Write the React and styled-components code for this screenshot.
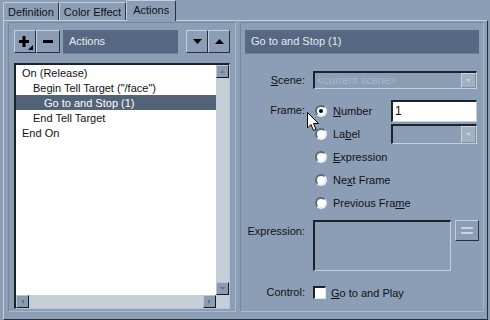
import styled, { createGlobalStyle } from "styled-components";

const bg = "#8c9eb5";
const titleBg = "#566882";
const light = "#c3cfdd";
const dark = "#28303c";

const GlobalStyle = createGlobalStyle`
  body {
    margin: 0;
    background: ${bg};
    font-family: "Liberation Sans", Arial, sans-serif;
    font-size: 11px;
    color: #111;
  }
`;

const Window = styled.div`
  width: 490px;
  height: 320px;
  box-sizing: border-box;
  padding: 0 2px 2px 3px;
  display: flex;
  flex-direction: column;
  background: ${bg};
`;

const TabRow = styled.div`
  height: 21px;
  display: flex;
  align-items: flex-end;
`;

const Tab = styled.div`
  position: relative;
  z-index: ${(p) => (p.$active ? 2 : 1)};
  height: ${(p) => (p.$active ? "21px" : "18px")};
  margin-bottom: ${(p) => (p.$active ? "-1px" : "0")};
  padding: ${(p) => (p.$active ? "0 6px 2px" : "0 4px")};
  box-sizing: border-box;
  display: flex;
  align-items: center;
  background: ${bg};
  border-top: 1px solid ${light};
  border-left: 1px solid ${light};
  border-right: 1px solid ${dark};
  border-radius: 2px 2px 0 0;
`;

const Panel = styled.div`
  flex: 1;
  display: flex;
  gap: 4px;
  padding: 1px 4px 7px 4px;
  border-top: 1px solid ${light};
  border-left: 1px solid ${light};
  border-right: 1px solid ${dark};
  border-bottom: 1px solid ${dark};
`;

const Pane = styled.div`
  position: relative;
  display: flex;
  flex-direction: column;
  box-sizing: border-box;
  width: ${(p) => p.$width || "auto"};
  flex: ${(p) => (p.$width ? "none" : "1")};
  padding: 7px ${(p) => p.$px || "4px"} ${(p) => p.$pb || "7px"};
  border: 1px solid;
  border-color: #7587a0 #a9bace #a9bace #7587a0;
`;

const Toolbar = styled.div`
  height: 23px;
  display: flex;
`;

const ToolButton = styled.div`
  position: relative;
  width: ${(p) => p.$w || 22}px;
  height: 23px;
  box-sizing: border-box;
  margin-right: ${(p) => p.$mr || 0}px;
  display: flex;
  align-items: center;
  justify-content: center;
  background: ${bg};
  border: 1px solid;
  border-color: ${light} ${dark} ${dark} ${light};
`;

const TitleBar = styled.div`
  flex: ${(p) => (p.$grow ? "1" : "none")};
  height: 23px;
  line-height: 23px;
  padding-left: 6px;
  margin-right: ${(p) => p.$mr || 0}px;
  background: ${titleBg};
  color: #e6ebf1;
  border-bottom: 1px solid #6d7f98;
`;

const ListBox = styled.div`
  margin-top: 10px;
  flex: 1;
  display: grid;
  grid-template-columns: 1fr 13px;
  grid-template-rows: 1fr 13px;
  border-top: 2px solid #1c222c;
  border-left: 2px solid #1c222c;
  border-right: 1px solid #b8c5d4;
  border-bottom: 1px solid #b8c5d4;
  background: #fff;
`;

const Rows = styled.div`
  background: #fff;
  overflow: hidden;
`;

const Row = styled.div`
  height: 15px;
  line-height: 16px;
  padding-left: ${(p) => 6 + p.$level * 11}px;
  white-space: nowrap;
  background: ${(p) => (p.$selected ? "#536377" : "transparent")};
  color: ${(p) => (p.$selected ? "#fff" : "#111")};
`;

const Track = styled.div`
  display: flex;
  flex-direction: ${(p) => (p.$horizontal ? "row" : "column")};
  justify-content: space-between;
  background: #c6ced8;
`;

const ScrollButton = styled.div`
  width: 13px;
  height: 13px;
  box-sizing: border-box;
  display: flex;
  align-items: center;
  justify-content: center;
  background: #8a9bb2;
  border: 1px solid;
  border-color: #b8c6d6 #141820 #141820 #b8c6d6;
`;

const Corner = styled.div`
  background: #c6ced8;
`;

const Form = styled.div`
  display: flex;
  flex-direction: column;
`;

const FieldRow = styled.div`
  display: grid;
  grid-template-columns: 60px 1fr;
  column-gap: 8px;
  margin-top: ${(p) => p.$mt}px;
`;

const Label = styled.div`
  text-align: right;
  height: ${(p) => p.$h}px;
  line-height: ${(p) => p.$h}px;
`;

const Combo = styled.div`
  width: ${(p) => p.$w}px;
  height: ${(p) => p.$h}px;
  box-sizing: border-box;
  display: flex;
  justify-content: space-between;
  align-items: stretch;
  border: 1px solid;
  border-width: 2px 1px 1px 2px;
  border-color: #1c222c #c3cfdd #c3cfdd #1c222c;
  color: #a9b6c7;
  line-height: ${(p) => p.$h - 3}px;
  padding-left: 2px;
`;

const ComboButton = styled.div`
  width: 13px;
  display: flex;
  align-items: center;
  justify-content: center;
  background: #a3b1c3;
  border: 1px solid;
  border-color: #c8d3e0 #7d8ea6 #7d8ea6 #c8d3e0;
`;

const RadioList = styled.div`
  display: flex;
  flex-direction: column;
`;

const Option = styled.div`
  height: 23px;
  display: flex;
  align-items: center;
`;

const OptionText = styled.div`
  width: ${(p) => (p.$w ? p.$w + "px" : "auto")};
  display: flex;
  align-items: center;
  gap: 6px;
  padding-left: 2px;
  box-sizing: border-box;
  u {
    text-decoration: underline;
  }
`;

const Radio = styled.span`
  width: 12px;
  height: 12px;
  box-sizing: border-box;
  border-radius: 50%;
  background: #fff;
  border: 2px solid;
  border-color: #5d6878 #e8edf3 #e8edf3 #5d6878;
  display: flex;
  align-items: center;
  justify-content: center;
  &::after {
    content: "";
    width: 4px;
    height: 4px;
    border-radius: 50%;
    background: ${(p) => (p.$checked ? "#000" : "transparent")};
  }
`;

const TextInput = styled.div`
  width: 86px;
  height: 22px;
  box-sizing: border-box;
  background: #fff;
  border: 1px solid;
  border-width: 2px 1px 1px 2px;
  border-color: #1c222c #c3cfdd #c3cfdd #1c222c;
  padding-left: 2px;
  font-size: 12px;
  line-height: 19px;
`;

const ExpressionRow = styled.div`
  display: flex;
  gap: 4px;
  align-items: flex-start;
`;

const TextArea = styled.div`
  width: 138px;
  height: 51px;
  box-sizing: border-box;
  border: 1px solid;
  border-width: 2px 1px 1px 2px;
  border-color: #1c222c #c3cfdd #c3cfdd #1c222c;
`;

const SmallButton = styled.div`
  width: 24px;
  height: 21px;
  box-sizing: border-box;
  display: flex;
  align-items: center;
  justify-content: center;
  background: ${bg};
  border: 1px solid;
  border-color: ${light} ${dark} ${dark} ${light};
`;

const CheckLine = styled.div`
  height: 23px;
  display: flex;
  align-items: center;
  gap: 5px;
  u {
    text-decoration: underline;
  }
`;

const Checkbox = styled.span`
  width: 13px;
  height: 13px;
  box-sizing: border-box;
  background: #fff;
  border: 1px solid;
  border-width: 2px 1px 1px 2px;
  border-color: #1c222c #dfe6ee #dfe6ee #1c222c;
`;

const Cursor = styled.svg`
  position: absolute;
  left: 66px;
  top: 89px;
`;

const Tri = ({ dir = "down", w = 7, h = 4, color = "#000" }) => {
  const pts =
    dir === "down"
      ? `0,0 ${w},0 ${w / 2},${h}`
      : dir === "up"
      ? `0,${h} ${w},${h} ${w / 2},0`
      : dir === "left"
      ? `${h},0 ${h},${w} 0,${w / 2}`
      : `0,0 0,${w} ${h},${w / 2}`;
  const horiz = dir === "left" || dir === "right";
  return (
    <svg width={horiz ? h : w} height={horiz ? w : h}>
      <polygon points={pts} fill={color} />
    </svg>
  );
};

const rows = [
  { text: "On (Release)", level: 0 },
  { text: 'Begin Tell Target ("/face")', level: 1 },
  { text: "Go to and Stop (1)", level: 2, selected: true },
  { text: "End Tell Target", level: 1 },
  { text: "End On", level: 0 },
];

export default function App() {
  return (
    <>
      <GlobalStyle />
      <Window>
        <TabRow>
          <Tab>Definition</Tab>
          <Tab>Color Effect</Tab>
          <Tab $active>Actions</Tab>
        </TabRow>
        <Panel>
          <Pane $width="228px" $px="5px" $pb="2px">
            <Toolbar>
              <ToolButton $w={22} $mr={0}>
                <svg width="20" height="20">
                  <rect x="4" y="8" width="10" height="3" fill="#000" />
                  <rect x="7.5" y="4" width="3" height="11" fill="#000" />
                  <polygon points="18,13 18,18 13,18" fill="#000" />
                </svg>
              </ToolButton>
              <ToolButton $w={24} $mr={3}>
                <svg width="12" height="4">
                  <rect x="1" y="0" width="10" height="3" fill="#000" />
                </svg>
              </ToolButton>
              <TitleBar $grow $mr={8}>
                Actions
              </TitleBar>
              <ToolButton $w={22}>
                <Tri dir="down" w={9} h={5} />
              </ToolButton>
              <ToolButton $w={22}>
                <Tri dir="up" w={9} h={5} />
              </ToolButton>
            </Toolbar>
            <ListBox>
              <Rows>
                {rows.map((r) => (
                  <Row key={r.text} $level={r.level} $selected={r.selected}>
                    {r.text}
                  </Row>
                ))}
              </Rows>
              <Track>
                <ScrollButton>
                  <Tri dir="up" w={5} h={3} color="#66768c" />
                </ScrollButton>
                <ScrollButton>
                  <Tri dir="down" w={5} h={3} color="#66768c" />
                </ScrollButton>
              </Track>
              <Track $horizontal>
                <ScrollButton>
                  <Tri dir="left" w={5} h={3} color="#66768c" />
                </ScrollButton>
                <ScrollButton>
                  <Tri dir="right" w={5} h={3} color="#66768c" />
                </ScrollButton>
              </Track>
              <Corner />
            </ListBox>
          </Pane>

          <Pane>
            <TitleBar>Go to and Stop (1)</TitleBar>
            <Form>
              <FieldRow $mt={17}>
                <Label $h={18}>
                  <u>S</u>cene:
                </Label>
                <Combo $w={164} $h={18}>
                  &lt;current scene&gt;
                  <ComboButton>
                    <Tri dir="down" w={5} h={3} color="#c9d2dd" />
                  </ComboButton>
                </Combo>
              </FieldRow>

              <FieldRow $mt={10}>
                <Label $h={23}>Frame:</Label>
                <RadioList>
                  <Option>
                    <OptionText $w={78}>
                      <Radio $checked />
                      <span>
                        <u>N</u>umber
                      </span>
                    </OptionText>
                    <TextInput>1</TextInput>
                  </Option>
                  <Option>
                    <OptionText $w={78}>
                      <Radio />
                      <span>
                        La<u>b</u>el
                      </span>
                    </OptionText>
                    <Combo $w={86} $h={20}>
                      <span />
                      <ComboButton>
                        <Tri dir="down" w={5} h={3} color="#c9d2dd" />
                      </ComboButton>
                    </Combo>
                  </Option>
                  <Option>
                    <OptionText>
                      <Radio />
                      <span>
                        <u>E</u>xpression
                      </span>
                    </OptionText>
                  </Option>
                  <Option>
                    <OptionText>
                      <Radio />
                      <span>
                        Ne<u>x</u>t Frame
                      </span>
                    </OptionText>
                  </Option>
                  <Option>
                    <OptionText>
                      <Radio />
                      <span>
                        Previous Fra<u>m</u>e
                      </span>
                    </OptionText>
                  </Option>
                </RadioList>
              </FieldRow>

              <FieldRow $mt={6}>
                <Label $h={23}>Expression:</Label>
                <ExpressionRow>
                  <TextArea />
                  <SmallButton>
                    <svg width="12" height="9">
                      <rect x="0" y="1" width="12" height="2" fill="#c9d2dd" />
                      <rect x="0" y="6" width="12" height="2" fill="#c9d2dd" />
                    </svg>
                  </SmallButton>
                </ExpressionRow>
              </FieldRow>

              <FieldRow $mt={10}>
                <Label $h={23}>Control:</Label>
                <CheckLine>
                  <Checkbox />
                  <span>
                    <u>G</u>o to and Play
                  </span>
                </CheckLine>
              </FieldRow>
            </Form>

            <Cursor width="13" height="21" viewBox="0 0 13 21">
              <polygon
                points="0.5,0.5 0.5,16 4,12.5 6.5,18.5 9,17.5 6.5,11.5 11.5,11.5"
                fill="#fff"
                stroke="#000"
                strokeWidth="1"
              />
            </Cursor>
          </Pane>
        </Panel>
      </Window>
    </>
  );
}
